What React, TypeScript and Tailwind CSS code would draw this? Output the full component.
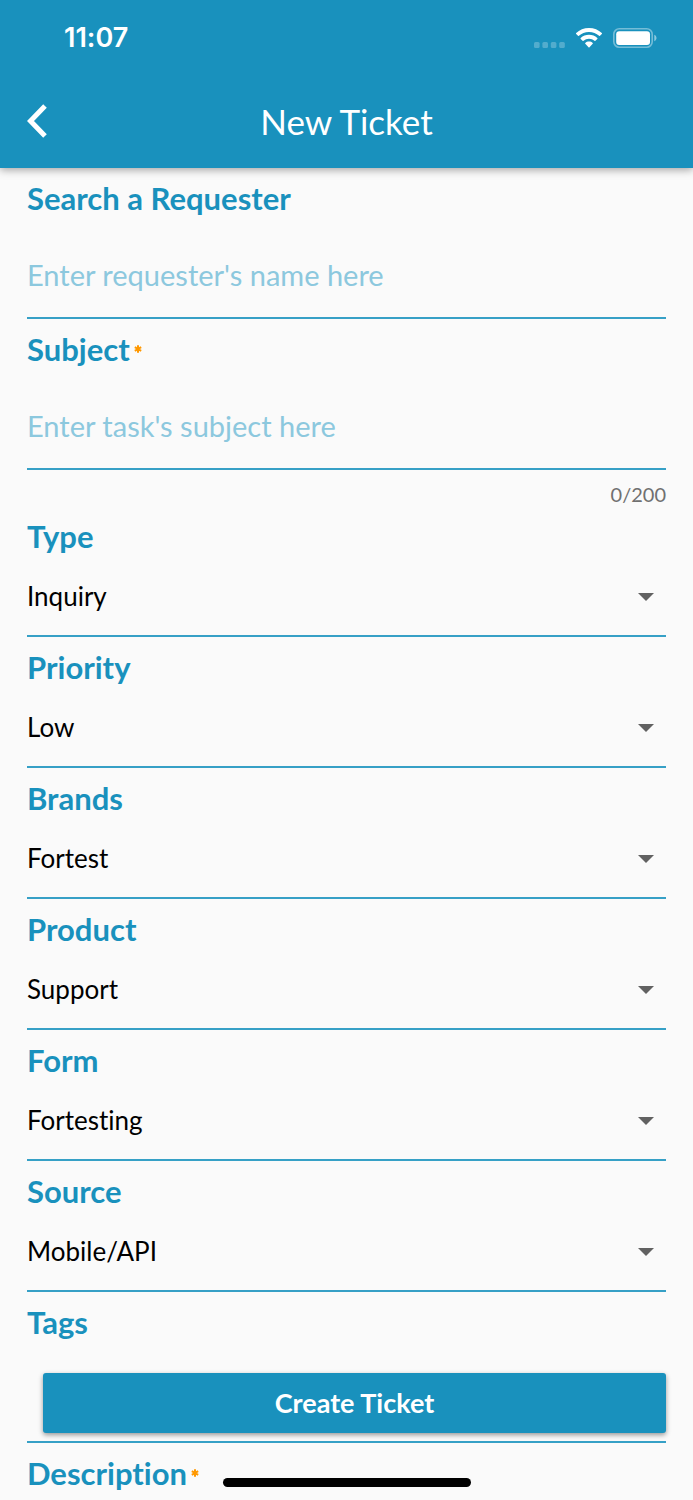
import React, { useState } from 'react';

const SELECT_FIELDS = [
  { id: 'type', label: 'Type', value: 'Inquiry' },
  { id: 'priority', label: 'Priority', value: 'Low' },
  { id: 'brands', label: 'Brands', value: 'Fortest' },
  { id: 'product', label: 'Product', value: 'Support' },
  { id: 'form', label: 'Form', value: 'Fortesting' },
  { id: 'source', label: 'Source', value: 'Mobile/API' },
];

const SUBJECT_LIMIT = 200;

interface FieldLabelProps {
  htmlFor: string;
  required?: boolean;
  children: React.ReactNode;
}

const FieldLabel: React.FC<FieldLabelProps> = ({ htmlFor, required, children }) => (
  <label htmlFor={htmlFor} className="flex h-10 items-center gap-1 text-[31px] font-bold text-[#1991bd]">
    {children}
    {required && (
      <svg viewBox="0 0 8 8" className="h-2 w-2 text-[#ff9800]" stroke="currentColor" strokeWidth="2" aria-hidden="true">
        <path d="M4 0.3v7.4M0.8 2.2l6.4 3.6M0.8 5.8l6.4-3.6" />
      </svg>
    )}
  </label>
);

interface TextFieldProps {
  id: string;
  label: string;
  placeholder?: string;
  required?: boolean;
  maxLength?: number;
  value: string;
  onChange: (value: string) => void;
}

const TextField: React.FC<TextFieldProps> = ({ id, label, placeholder, required, maxLength, value, onChange }) => (
  <div className="pt-[10px]">
    <FieldLabel htmlFor={id} required={required}>{label}</FieldLabel>
    <input
      id={id}
      type="text"
      value={value}
      maxLength={maxLength}
      placeholder={placeholder}
      onChange={(e) => onChange(e.target.value)}
      className="block h-[101px] w-full border-b-2 border-[#36a0c6] bg-transparent pt-[14px] text-[29px] text-black outline-none placeholder:text-[#8cc8de]"
    />
  </div>
);

const SelectField: React.FC<{ id: string; label: string; value: string }> = ({ id, label, value }) => (
  <div className="pt-[10px]">
    <FieldLabel htmlFor={id}>{label}</FieldLabel>
    <div className="grid items-center border-b-2 border-[#36a0c6] pt-[2px]">
      <select
        id={id}
        defaultValue={value}
        className="col-start-1 row-start-1 h-[77px] w-full appearance-none bg-transparent text-[26px] text-black outline-none"
      >
        <option value={value}>{value}</option>
      </select>
      <svg viewBox="0 0 16 8" className="pointer-events-none col-start-1 row-start-1 mr-3 h-2 w-4 justify-self-end" fill="#616161" aria-hidden="true">
        <path d="M0 0h16L8 8z" />
      </svg>
    </div>
  </div>
);

const StatusBar: React.FC = () => (
  <div className="flex h-[76px] items-center justify-between pl-16 pr-9 font-['Inter',sans-serif]">
    <span className="text-[27px] font-semibold">11:07</span>
    <div className="flex items-center gap-[11px]">
      {/* No signal */}
      <svg viewBox="0 0 31 20" className="h-5 w-[31px]" fill="#fff" fillOpacity="0.25" aria-hidden="true">
        <rect x="0" y="14" width="5.6" height="6" rx="1.5" />
        <rect x="8.4" y="14" width="5.6" height="6" rx="1.5" />
        <rect x="16.8" y="14" width="5.6" height="6" rx="1.5" />
        <rect x="25.2" y="14" width="5.6" height="6" rx="1.5" />
      </svg>
      {/* Wifi */}
      <svg viewBox="0 0 26 20" className="h-5 w-[26px]" fill="#fff" aria-hidden="true">
        <path d="M13 0C8 0 3.500 1.900 0.200 5.100a.6.6 0 0 0 0 .9L2 7.800c.3.300.6.300.9 0A14.500 14.500 0 0 1 13 3.900c3.900 0 7.400 1.500 10.100 3.900.3.300.6.300.9 0L25.800 6a.6.6 0 0 0 0-.9C22.500 1.900 18 0 13 0z" />
        <path d="M13 6.800c-3.200 0-6.100 1.200-8.300 3.200a.6.6 0 0 0 0 .9l1.900 1.900c.3.300.6.200.9 0A8.300 8.300 0 0 1 13 10.700c2.100 0 4 .8 5.500 2.100.3.200.6.300.9 0l1.900-1.900a.6.6 0 0 0 0-.9c-2.200-2-5.100-3.200-8.300-3.200z" />
        <path d="M13 13.500c-1.400 0-2.700.5-3.700 1.400a.6.6 0 0 0 0 .9l3.200 3.400c.3.300.7.300 1 0l3.200-3.400a.6.6 0 0 0 0-.9c-1-.9-2.300-1.400-3.700-1.400z" />
      </svg>
      {/* Battery */}
      <svg viewBox="0 0 44 20" className="h-5 w-11" aria-hidden="true">
        <rect x="0.800" y="0.800" width="38.400" height="18.400" rx="5.500" fill="none" stroke="#fff" strokeOpacity="0.4" strokeWidth="1.600" />
        <rect x="3.200" y="3.200" width="33.800" height="13.800" rx="3" fill="#fff" />
        <path d="M41.300 6.800v6.400c1.400-.6 2.200-1.900 2.200-3.200s-.8-2.600-2.200-3.200z" fill="#fff" fillOpacity="0.5" />
      </svg>
    </div>
  </div>
);

const App: React.FC = () => {
  const [requester, setRequester] = useState('');
  const [subject, setSubject] = useState('');
  const [tags, setTags] = useState('');
  const [description, setDescription] = useState('');

  return (
    <div className="relative flex h-screen flex-col overflow-hidden bg-[#fafafa] font-['Lato',sans-serif] [font-variant-ligatures:none]">
      {/* Header */}
      <header className="relative z-10 shrink-0 bg-[#1991bd] text-white shadow-[0_2px_8px_rgba(0,0,0,0.35)]">
        <StatusBar />
        <div className="grid h-[92px] grid-cols-[1fr_auto_1fr] items-start px-[27px] pt-[28px]">
          <button type="button" aria-label="Back" className="w-5">
            <svg viewBox="0 0 20 34" className="h-[34px] w-5" fill="none" stroke="currentColor" strokeWidth="5" aria-hidden="true">
              <path d="M18 2L3.500 17L18 32" />
            </svg>
          </button>
          <h1 className="text-[35px] leading-[34px]">New Ticket</h1>
        </div>
      </header>

      {/* Form */}
      <main className="flex-1 overflow-y-auto px-[27px] [scrollbar-width:none]">
        <form id="ticket-form" onSubmit={(e) => e.preventDefault()}>
          <TextField
            id="requester"
            label="Search a Requester"
            placeholder="Enter requester's name here"
            value={requester}
            onChange={setRequester}
          />
          <TextField
            id="subject"
            label="Subject"
            placeholder="Enter task's subject here"
            required
            maxLength={SUBJECT_LIMIT}
            value={subject}
            onChange={setSubject}
          />
          <p className="flex h-9 items-end justify-end text-[20px] leading-6 text-[#707070]">
            {subject.length}/{SUBJECT_LIMIT}
          </p>
          {SELECT_FIELDS.map((field) => (
            <SelectField key={field.id} {...field} />
          ))}
          <TextField id="tags" label="Tags" value={tags} onChange={setTags} />
          <TextField id="description" label="Description" required value={description} onChange={setDescription} />
        </form>
      </main>

      {/* Floating submit button */}
      <button
        type="submit"
        form="ticket-form"
        className="absolute bottom-[67px] left-[43px] right-[27px] h-[60px] rounded-[3px] bg-[#1991bd] text-[27px] font-bold text-white shadow-[0_2px_5px_rgba(0,0,0,0.4)]"
      >
        Create Ticket
      </button>

      {/* Home indicator */}
      <div className="absolute bottom-[13px] left-1/2 h-[9px] w-[248px] -translate-x-1/2 rounded-full bg-black" />
    </div>
  );
};

export default App;
